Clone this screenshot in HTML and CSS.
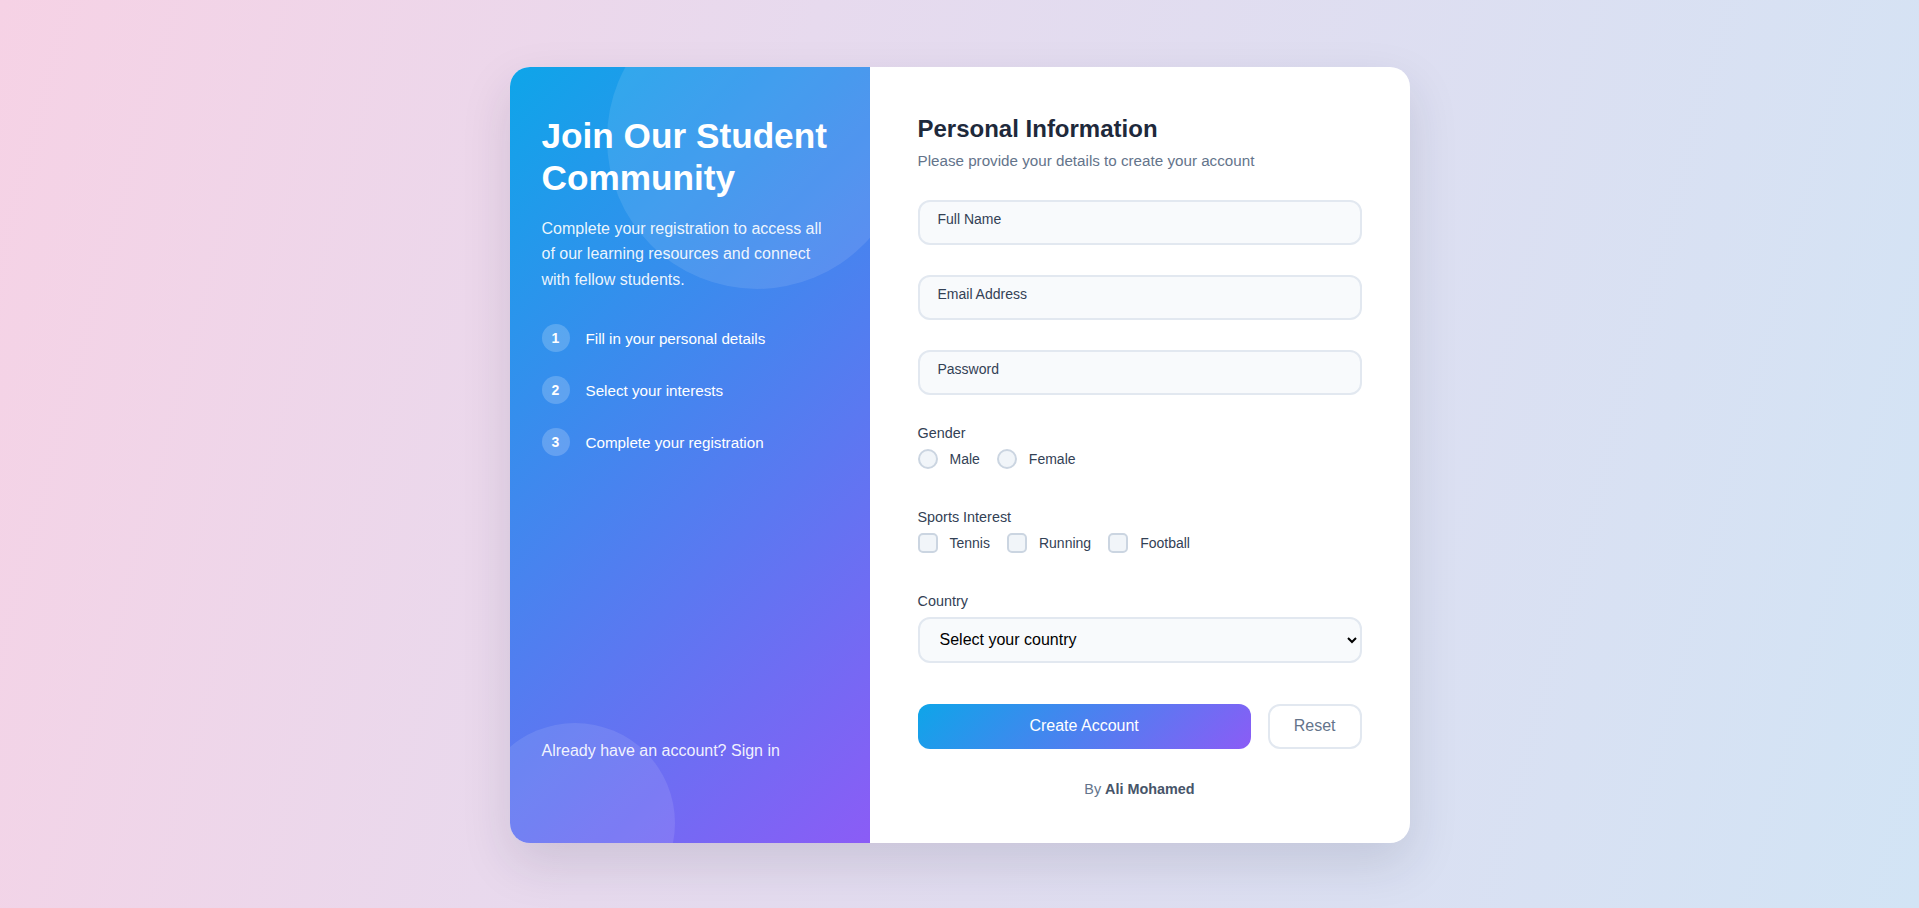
FILE: index.html
```html
<!DOCTYPE html>
<html lang="en">
<head>
<meta charset="UTF-8">
<title>Student Registration</title>
<link rel="stylesheet" href="styles.css">
</head>
<body>
<main class="card">
  <section class="intro">
    <h1 class="intro-title">Join Our Student Community</h1>
    <p class="intro-text">Complete your registration to access all of our learning resources and connect with fellow students.</p>
    <ul class="steps">
      <li class="step"><span class="step-num">1</span><span>Fill in your personal details</span></li>
      <li class="step"><span class="step-num">2</span><span>Select your interests</span></li>
      <li class="step"><span class="step-num">3</span><span>Complete your registration</span></li>
    </ul>
    <p class="intro-footer">Already have an account? Sign in</p>
  </section>

  <section class="form-panel">
    <h2 class="form-title">Personal Information</h2>
    <p class="form-subtitle">Please provide your details to create your account</p>
    <form class="form">
      <div class="group">
        <input class="field" type="text" placeholder="Full Name">
      </div>
      <div class="group">
        <input class="field" type="email" placeholder="Email Address">
      </div>
      <div class="group">
        <input class="field" type="password" placeholder="Password">
      </div>
      <div class="group">
        <div class="group-label">Gender</div>
        <div class="options">
          <label class="option"><span class="radio"></span>Male</label>
          <label class="option"><span class="radio"></span>Female</label>
        </div>
      </div>
      <div class="group">
        <div class="group-label">Sports Interest</div>
        <div class="options">
          <label class="option"><span class="check"></span>Tennis</label>
          <label class="option"><span class="check"></span>Running</label>
          <label class="option"><span class="check"></span>Football</label>
        </div>
      </div>
      <div class="group">
        <div class="group-label">Country</div>
        <select class="select">
          <option>Select your country</option>
        </select>
      </div>
      <div class="actions">
        <button type="button" class="btn-primary">Create Account</button>
        <button type="button" class="btn-secondary">Reset</button>
      </div>
    </form>
    <p class="credit">By <strong>Ali Mohamed</strong></p>
  </section>
</main>
</body>
</html>
```

FILE: styles.css
```css
* {
  box-sizing: border-box;
}

html, body {
  margin: 0;
  padding: 0;
}

body {
  min-height: 100vh;
  display: flex;
  align-items: center;
  justify-content: center;
  font-family: "Liberation Sans", Arial, sans-serif;
  background: linear-gradient(105deg, #f6d2e5 0%, #e7daee 38%, #d2e4f5 100%);
}

.card {
  display: grid;
  grid-template-columns: 360px 540px;
  background: #ffffff;
  border-radius: 20px;
  overflow: hidden;
  box-shadow: 0 20px 50px rgba(30, 41, 59, 0.13);
  margin-top: 2px;
}

/* Left intro panel */
.intro {
  position: relative;
  overflow: hidden;
  display: flex;
  flex-direction: column;
  padding: 48px 32px;
  color: #ffffff;
  background: linear-gradient(135deg, #0ea5e9 0%, #8b5cf6 100%);
}

.intro::before {
  content: "";
  position: absolute;
  width: 300px;
  height: 300px;
  top: -78px;
  right: -37px;
  border-radius: 50%;
  background: rgba(255, 255, 255, 0.1);
}

.intro::after {
  content: "";
  position: absolute;
  width: 200px;
  height: 200px;
  bottom: -80px;
  left: -35px;
  border-radius: 50%;
  background: rgba(255, 255, 255, 0.1);
}

.intro > * {
  position: relative;
  z-index: 1;
}

.intro-title {
  margin: 0 0 16px;
  font-size: 35.2px;
  line-height: 1.2;
  font-weight: 700;
}

.intro-text {
  margin: 0 0 32px;
  font-size: 16px;
  line-height: 1.6;
  color: rgba(255, 255, 255, 0.92);
}

.steps {
  list-style: none;
  margin: 0;
  padding: 0;
  display: flex;
  flex-direction: column;
  gap: 24px;
}

.step {
  display: flex;
  align-items: center;
  gap: 16px;
  font-size: 15.2px;
}

.step-num {
  width: 28px;
  height: 28px;
  border-radius: 50%;
  background: rgba(255, 255, 255, 0.2);
  display: flex;
  align-items: center;
  justify-content: center;
  font-size: 14px;
  font-weight: 700;
  flex-shrink: 0;
}

.intro-footer {
  margin: auto 0 31px;
  font-size: 16px;
  line-height: 1.6;
  color: rgba(255, 255, 255, 0.92);
}

/* Right form panel */
.form-panel {
  padding: 48px 48px 46px;
}

.form-title {
  margin: 0 0 8px;
  font-size: 24px;
  line-height: 1.2;
  font-weight: 700;
  color: #1e293b;
}

.form-subtitle {
  margin: 0 0 31px;
  font-size: 15.2px;
  color: #64748b;
}

.form {
  display: flex;
  flex-direction: column;
}

.group {
  margin-bottom: 30px;
}

.field {
  display: block;
  width: 100%;
  height: 45px;
  padding: 9px 18px 16px;
  border: 2px solid #e2e8f0;
  border-radius: 12px;
  background: #f8fafc;
  font-family: inherit;
  font-size: 14px;
  color: #334155;
  outline: none;
}

.field::placeholder {
  color: #334155;
  opacity: 1;
}

.group-label {
  font-size: 14.4px;
  color: #334155;
  margin-bottom: 8px;
}

.options {
  display: flex;
  align-items: center;
  gap: 17px;
  margin-bottom: 10px;
}

.option {
  display: flex;
  align-items: center;
  gap: 12px;
  font-size: 14px;
  color: #334155;
  height: 20px;
}

.radio,
.check {
  width: 20px;
  height: 20px;
  border: 2px solid #cbd5e1;
  background: #f1f5f9;
  flex-shrink: 0;
}

.radio {
  border-radius: 50%;
}

.check {
  border-radius: 5px;
}

.select {
  display: block;
  width: 100%;
  height: 46px;
  padding: 0 12px 0 16px;
  border: 2px solid #e2e8f0;
  border-radius: 12px;
  background-color: #f8fafc;
  font-family: inherit;
  font-size: 16px;
  color: #000000;
  outline: none;
}

.actions {
  display: flex;
  gap: 17px;
  margin-top: 11px;
}

.btn-primary {
  flex: 1;
  height: 45px;
  border: none;
  border-radius: 12px;
  background: linear-gradient(135deg, #0ea5e9 0%, #8b5cf6 100%);
  color: #ffffff;
  font-family: inherit;
  font-size: 16px;
  cursor: pointer;
}

.btn-secondary {
  height: 45px;
  padding: 0 24px;
  border: 2px solid #e2e8f0;
  border-radius: 12px;
  background: #ffffff;
  color: #64748b;
  font-family: inherit;
  font-size: 16px;
  cursor: pointer;
}

.credit {
  margin: 32px 0 0;
  text-align: center;
  font-size: 14.4px;
  color: #64748b;
}

.credit strong {
  color: #475569;
}
```
